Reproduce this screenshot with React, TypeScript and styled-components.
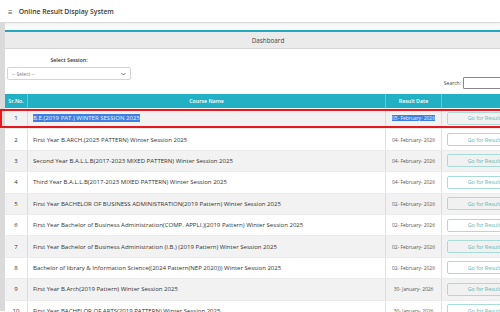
import {ReactElement} from "react";
import styled, {createGlobalStyle} from "styled-components";

const GlobalStyle = createGlobalStyle`
  html, body {
    margin: 0;
    padding: 0;
    overflow: hidden;
    background: #fafafa;
    font-family: "Open Sans", "Noto Sans", sans-serif;
    color: #333;
  }
`;

const Page = styled.div`
  width: 500px;
  height: 312px;
  overflow: hidden;
`;

const TopBar = styled.header`
  height: 23px;
  display: flex;
  align-items: center;
  gap: 6px;
  padding: 1px 0 0 8px;
  box-sizing: border-box;
  background: #fff;
  border-bottom: 1px solid #dcdcdc;
  box-shadow: 0 1px 2px rgba(0, 0, 0, .06);
  font-size: 6.8px;
  font-weight: 600;
  color: #3a3a3a;
`;

const Burger = styled.span`
  font-size: 8px;
  font-weight: 400;
  color: #555;
`;

const Main = styled.div`
  display: flex;
  height: 288px;
`;

const SideStrip = styled.div`
  width: 5px;
  flex: none;
  background: #dadada;
`;

const Content = styled.div`
  flex: none;
  padding-top: 7px;
`;

const Card = styled.section`
  width: 526px;
  background: #fff;
  border-top: 2px solid #23a9bd;
`;

const CardHead = styled.div`
  height: 16px;
  display: flex;
  align-items: center;
  justify-content: center;
  background: #ebebeb;
  border-bottom: 1px solid #d6d6d6;
  font-size: 6.3px;
  color: #444;
`;

const Filters = styled.div`
  display: flex;
  justify-content: space-between;
  align-items: flex-end;
  padding: 7px 0 5px 2px;
`;

const SessionBox = styled.div`
  width: 124px;
  display: flex;
  flex-direction: column;
  align-items: center;
  gap: 3px;
`;

const FieldLabel = styled.label`
  font-size: 5.3px;
  font-weight: 600;
  color: #333;
`;

const SelectBox = styled.div`
  width: 124px;
  height: 13px;
  box-sizing: border-box;
  display: flex;
  align-items: center;
  justify-content: space-between;
  padding: 0 4px;
  border: 1px solid #d4d4d4;
  border-radius: 2px;
  font-size: 5px;
  color: #777;
  margin-bottom: 9px;
`;

const SearchBox = styled.div`
  display: flex;
  align-items: center;
  gap: 2px;
  font-size: 5px;
  color: #444;
`;

const SearchInput = styled.div`
  width: 66px;
  height: 10px;
  border: 1px solid #888;
  border-radius: 1px;
`;

const Grid = styled.div<{ $head?: boolean; $alt?: boolean; $marked?: boolean }>`
  position: relative;
  display: grid;
  grid-template-columns: 23px 358px 56px 1fr;
  height: ${p => (p.$head ? "14px" : "21.4px")};
  background: ${p => (p.$head ? "#22b0c4" : p.$alt ? "#f2f2f2" : "#fff")};
  color: ${p => (p.$head ? "#fff" : "#333")};
  font-size: ${p => (p.$head ? "5.3px" : "6.05px")};
  font-weight: ${p => (p.$head ? 600 : 400)};
  border-bottom: ${p => (p.$head ? "none" : "1px solid #ececec")};
  box-sizing: border-box;

  ${p => p.$marked && `
    &::after {
      content: "";
      position: absolute;
      left: -5px;
      right: 0;
      top: 1px;
      bottom: 0;
      border: 2px solid #e3191f;
      pointer-events: none;
    }
  `}
`;

const Cell = styled.div<{ $align?: "left" | "center"; $line?: boolean }>`
  display: flex;
  align-items: center;
  justify-content: ${p => (p.$align === "left" ? "flex-start" : "center")};
  padding-left: ${p => (p.$align === "left" ? "5px" : "0")};
  border-right: ${p => (p.$line ? "1px solid rgba(200, 200, 200, .55)" : "none")};
  white-space: nowrap;
  overflow: hidden;
`;

const DateText = styled.span<{ $picked?: boolean }>`
  font-size: 4.9px;
  color: ${p => (p.$picked ? "#eef3ff" : "#555")};
  background: ${p => (p.$picked ? "#3f7fe0" : "transparent")};
`;

const Picked = styled.span`
  background: #3f7fe0;
  color: #eef3ff;
`;

const GoButton = styled.button<{ $grey?: boolean }>`
  width: 74px;
  height: 13px;
  flex: none;
  padding: 0;
  border: 1px solid #a9dcd6;
  border-radius: 2px;
  background: ${p => (p.$grey ? "#f1f1f1" : "#fff")};
  color: #5cb8b0;
  font-family: inherit;
  font-size: 5.4px;
  white-space: nowrap;
`;

type Result = {
    course: string;
    date: string;
};

const results: Result[] = [
    {course: "B.E.(2019 PAT.) WINTER SESSION 2025", date: "05- February- 2026"},
    {course: "First Year B.ARCH.(2025 PATTERN) Winter Session 2025", date: "04- February- 2026"},
    {course: "Second Year B.A.L.L.B(2017-2023 MIXED PATTERN) Winter Session 2025", date: "04- February- 2026"},
    {course: "Third Year B.A.L.L.B(2017-2023 MIXED PATTERN) Winter Session 2025", date: "04- February- 2026"},
    {course: "First Year BACHELOR OF BUSINESS ADMINISTRATION(2019 Pattern) Winter Session 2025", date: "02- February- 2026"},
    {course: "First Year Bachelor of Business Administration(COMP. APPLI.)(2019 Pattern) Winter Session 2025", date: "02- February- 2026"},
    {course: "First Year Bachelor of Business Administration (I.B.) (2019 Pattern) Winter Session 2025", date: "02- February- 2026"},
    {course: "Bachelor of library & Information Science((2024 Pattern(NEP 2020))) Winter Session 2025", date: "02- February- 2026"},
    {course: "First Year B.Arch(2019 Pattern) Winter Session 2025", date: "30- January- 2026"},
    {course: "First Year BACHELOR OF ARTS(2019 PATTERN) Winter Session 2025", date: "30- January- 2026"},
];

export default function App(): ReactElement {
    return (
        <Page>
            <GlobalStyle/>
            <TopBar>
                <Burger>≡</Burger>
                Online Result Display System
            </TopBar>
            <Main>
                <SideStrip/>
                <Content>
                    <Card>
                        <CardHead>Dashboard</CardHead>
                        <Filters>
                            <SessionBox>
                                <FieldLabel>Select Session:</FieldLabel>
                                <SelectBox>
                                    -- Select --
                                    <svg width="5" height="4" viewBox="0 0 10 6">
                                        <path d="M1 1l4 4 4-4" fill="none" stroke="#555" strokeWidth="1.6"/>
                                    </svg>
                                </SelectBox>
                            </SessionBox>
                            <SearchBox>
                                Search:
                                <SearchInput/>
                            </SearchBox>
                        </Filters>
                        <Grid $head>
                            <Cell $line>Sr.No.</Cell>
                            <Cell $line>Course Name</Cell>
                            <Cell $line>Result Date</Cell>
                            <Cell/>
                        </Grid>
                        {results.map((r, i) => (
                            <Grid key={i} $alt={i % 2 === 0} $marked={i === 0}>
                                <Cell $line>{i + 1}</Cell>
                                <Cell $line $align="left">
                                    {i === 0 ? <Picked>{r.course}</Picked> : r.course}
                                </Cell>
                                <Cell $line>
                                    <DateText $picked={i === 0}>{r.date}</DateText>
                                </Cell>
                                <Cell $align="left">
                                    <GoButton $grey={i % 2 === 0}>Go for Result</GoButton>
                                </Cell>
                            </Grid>
                        ))}
                    </Card>
                </Content>
            </Main>
        </Page>
    );
}
